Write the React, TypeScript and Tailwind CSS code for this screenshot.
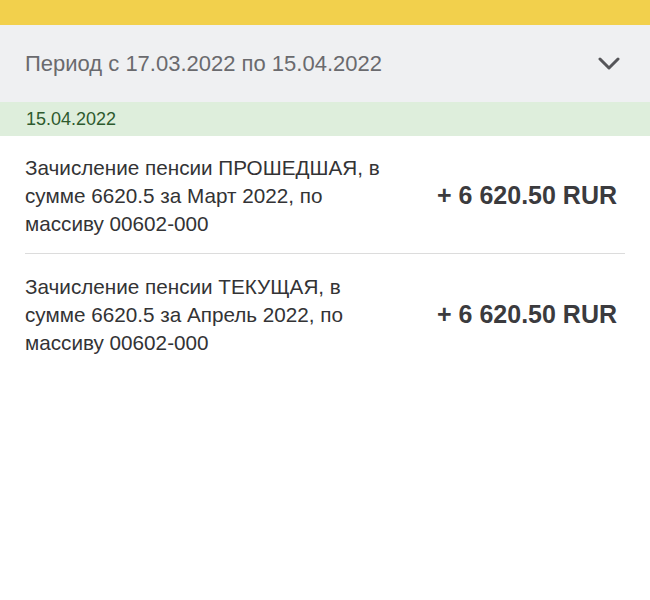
import React from "react";

const rows = [
  {
    lines: ["Зачисление пенсии ПРОШЕДШАЯ, в", "сумме 6620.5 за Март 2022, по", "массиву 00602-000"],
    amount: "+ 6 620.50 RUR",
  },
  {
    lines: ["Зачисление пенсии ТЕКУЩАЯ, в", "сумме 6620.5 за Апрель 2022, по", "массиву 00602-000"],
    amount: "+ 6 620.50 RUR",
  },
];

export default function App() {
  return (
    <div className="w-[650px] h-[600px] bg-white font-['Liberation_Sans',Arial,sans-serif]">
      <div className="h-[25px] bg-[#f2d04c]" />
      <div className="h-[77px] bg-[#eff0f2] flex items-center justify-between pl-[25px] pr-[30px]">
        <span className="text-[22px] text-[#6a6a6e]">Период с 17.03.2022 по 15.04.2022</span>
        <svg width="22" height="14" viewBox="0 0 22 14" fill="none">
          <path d="M2 2 L11 11 L20 2" stroke="#555559" strokeWidth="3" strokeLinecap="round" strokeLinejoin="round" />
        </svg>
      </div>
      <div className="h-[34px] bg-[#deeedc] flex items-center pl-[26px]">
        <span className="text-[18px] text-[#2e5a2e]">15.04.2022</span>
      </div>
      <div className="px-[25px]">
        {rows.map((r, i) => (
          <div
            key={i}
            className={`flex items-center justify-between h-[118px] pt-[3px] ${i === 0 ? "border-b border-[#dcdcdc]" : ""}`}
          >
            <div className="text-[20.7px] leading-[28px] text-[#333335]">
              {r.lines.map((l, j) => (
                <div key={j}>{l}</div>
              ))}
            </div>
            <div className="text-[25px] font-bold text-[#3b3b3e] pr-[8px]">{r.amount}</div>
          </div>
        ))}
      </div>
    </div>
  );
}
